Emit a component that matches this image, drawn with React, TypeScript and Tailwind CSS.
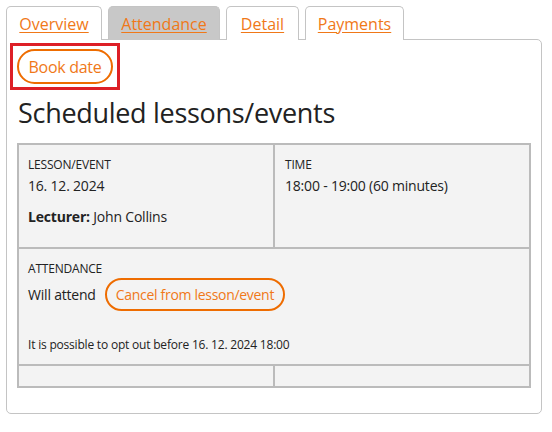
const tabs = [
  { label: "Overview", width: "w-[96px]", active: false },
  { label: "Attendance", width: "w-[112px]", active: true },
  { label: "Detail", width: "w-[73px]", active: false },
  { label: "Payments", width: "w-[99px]", active: false },
];

function Tabs() {
  return (
    <div className="flex items-end gap-[6px]">
      {tabs.map((tab) => (
        <div
          key={tab.label}
          className={`${tab.width} h-[34px] -mb-px flex items-center justify-center rounded-t-[5px] border border-b-0 border-[#c4c4c4] ${
            tab.active ? "bg-[#c8c8c8]" : "bg-white"
          }`}
        >
          <a href="#" className="text-[16px] text-[#f07818] underline underline-offset-2">
            {tab.label}
          </a>
        </div>
      ))}
    </div>
  );
}

function Label({ children }: { children: React.ReactNode }) {
  return <div className="text-[12px] uppercase text-[#222] leading-[16px]">{children}</div>;
}

export default function App() {
  return (
    <div className="p-[6px] font-['Open_Sans','Noto_Sans',sans-serif] text-[#222] w-[552px]">
      <Tabs />
      <div className="w-[536px] border border-[#c4c4c4] rounded-b-[5px] rounded-tr-[5px] px-[10px] pt-[3px] pb-[25px] bg-white">
        {/* focus ring round the first action */}
        <div className="inline-block -ml-[7px] border-[3px] border-[#dd1f26] p-[3px] pl-[4px] pr-[4px]">
          <button className="block h-[35px] w-[96px] rounded-full border-2 border-[#ee6c00] text-[16px] text-[#f07818] tracking-[-0.3px]">
            Book date
          </button>
        </div>
        <h1 className="mt-[3px] text-[27px] leading-[40px] tracking-[-0.3px] text-[#222] pl-px">
          Scheduled lessons/events
        </h1>
        <div className="mt-[10px] border-2 border-[#bbbbbb] bg-[#f3f3f3] text-[14px] tracking-[-0.2px]">
          <div className="grid grid-cols-[254px_1fr] h-[102px]">
            <div className="px-[9px] pt-[12px]">
              <Label>Lesson/Event</Label>
              <div className="text-[14px] leading-[20px] mt-[3px]">16. 12. 2024</div>
              <div className="mt-[11px] leading-[20px]">
                <span className="font-bold">Lecturer:</span> John Collins
              </div>
            </div>
            <div className="border-l-2 border-[#bbbbbb] px-[10px] pt-[12px]">
              <Label>Time</Label>
              <div className="leading-[20px] mt-[3px]">18:00 - 19:00 (60 minutes)</div>
            </div>
          </div>
          <div className="border-t-2 border-[#bbbbbb] px-[9px] pt-[12px] h-[117px]">
            <Label>Attendance</Label>
            <div className="flex items-center gap-[9px] mt-[1px]">
              <span>Will attend</span>
              <button className="h-[33px] px-[9px] rounded-full border-2 border-[#ee6c00] text-[#f07818] text-[14px] tracking-[-0.3px]">
                Cancel from lesson/event
              </button>
            </div>
            <div className="mt-[26px] text-[12px] leading-[16px]">
              It is possible to opt out before 16. 12. 2024 18:00
            </div>
          </div>
          <div className="grid grid-cols-[254px_1fr] border-t-2 border-[#bbbbbb] h-[22px]">
            <div />
            <div className="border-l-2 border-[#bbbbbb]" />
          </div>
        </div>
      </div>
    </div>
  );
}
